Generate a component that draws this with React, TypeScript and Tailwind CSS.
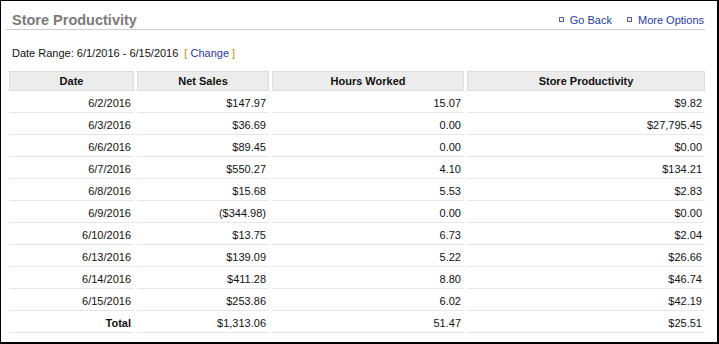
const rows = [
  { date: '6/2/2016', sales: '$147.97', hours: '15.07', prod: '$9.82' },
  { date: '6/3/2016', sales: '$36.69', hours: '0.00', prod: '$27,795.45' },
  { date: '6/6/2016', sales: '$89.45', hours: '0.00', prod: '$0.00' },
  { date: '6/7/2016', sales: '$550.27', hours: '4.10', prod: '$134.21' },
  { date: '6/8/2016', sales: '$15.68', hours: '5.53', prod: '$2.83' },
  { date: '6/9/2016', sales: '($344.98)', hours: '0.00', prod: '$0.00' },
  { date: '6/10/2016', sales: '$13.75', hours: '6.73', prod: '$2.04' },
  { date: '6/13/2016', sales: '$139.09', hours: '5.22', prod: '$26.66' },
  { date: '6/14/2016', sales: '$411.28', hours: '8.80', prod: '$46.74' },
  { date: '6/15/2016', sales: '$253.86', hours: '6.02', prod: '$42.19' },
];

const cols = 'grid grid-cols-[125px_132px_192px_238px] gap-x-[3px]';

function Bullet() {
  return <span className="inline-block w-[5px] h-[5px] border border-[#59609a] bg-[#eef0f8] mr-[6px] mb-[2px]" />;
}

function Row({ a, b, c, d, bold }: { a: string; b: string; c: string; d: string; bold?: boolean }) {
  const cell = 'h-[19px] border-b border-[#e6e6e6] text-right pr-[3px] leading-[18px]';
  return (
    <div className={cols}>
      <div className={`${cell} ${bold ? 'font-bold' : ''}`}>{a}</div>
      <div className={cell}>{b}</div>
      <div className={cell}>{c}</div>
      <div className={cell}>{d}</div>
    </div>
  );
}

export default function App() {
  const head = 'h-[20px] bg-[#ececec] border border-[#dcdcdc] text-center font-bold leading-[18px]';
  return (
    <div
      className="w-[719px] h-[344px] bg-white border-l border-t border-r-2 border-b-2 border-black text-[11px] text-[#111]"
      style={{ fontFamily: '"Liberation Sans", Arial, sans-serif' }}
    >
      <div className="ml-[5px] mr-[12px] mt-[10px] h-[19px] border-b border-[#cccccc] flex items-end justify-between">
        <div className="ml-[6px] text-[14.5px] font-bold text-[#7a7a7a] leading-[18px]">Store Productivity</div>
        <div className="flex items-center gap-[15px] text-[#1f3aa6] leading-[16px] mb-[1px] pr-[1px]">
          <span className="flex items-center"><Bullet />Go Back</span>
          <span className="flex items-center"><Bullet />More Options</span>
        </div>
      </div>
      <div className="ml-[11px] mt-[16px] leading-[14px]">
        Date Range: <span className="font-medium">6/1/2016 - 6/15/2016</span>
        <span className="ml-[6px] text-[#c08a20]">[</span>{' '}
        <span className="text-[#1f3aa6]">Change</span>{' '}
        <span className="text-[#c08a20]">]</span>
      </div>
      <div className="ml-[8px] mt-[11px] flex flex-col gap-y-[3px]">
        <div className={cols}>
          <div className={head}>Date</div>
          <div className={head}>Net Sales</div>
          <div className={head}>Hours Worked</div>
          <div className={head}>Store Productivity</div>
        </div>
        {rows.map((r) => (
          <Row key={r.date} a={r.date} b={r.sales} c={r.hours} d={r.prod} />
        ))}
        <Row a="Total" b="$1,313.06" c="51.47" d="$25.51" bold />
      </div>
    </div>
  );
}
